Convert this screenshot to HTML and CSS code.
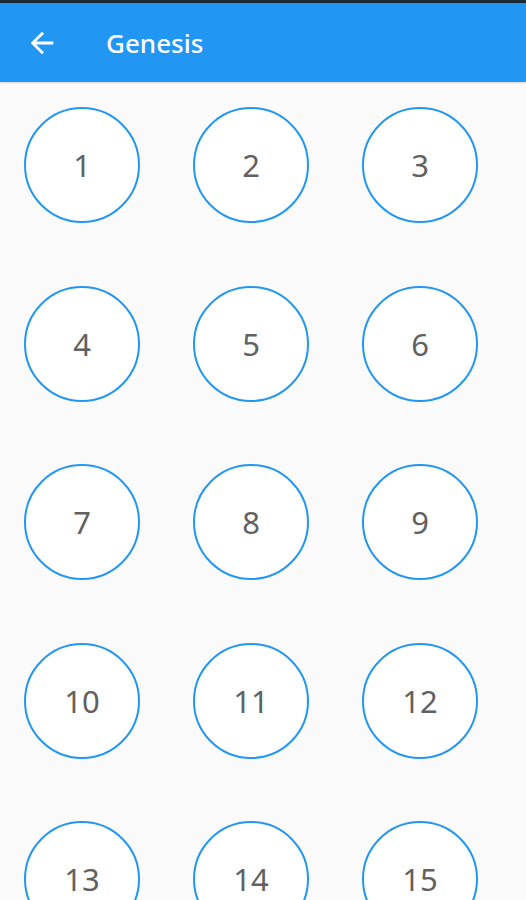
FILE: index.html
```html
<!DOCTYPE html>
<html lang="en">
<head>
    <meta charset="UTF-8">
    <meta name="viewport" content="width=device-width, initial-scale=1.0">
    <title>Genesis</title>
    <link rel="stylesheet" href="styles.css">
</head>
<body>
    <div class="status-bar"></div>
    <header class="app-bar">
        <button class="back-button" aria-label="Back">
            <svg viewBox="0 0 24 24" width="34" height="34">
                <path d="M20 11H7.83l5.59-5.59L12 4l-8 8 8 8 1.41-1.41L7.83 13H20v-2z" fill="#fff"/>
            </svg>
        </button>
        <h1 class="title">Genesis</h1>
    </header>

    <!-- Chapter list -->
    <main class="chapters">
        <a class="chapter" href="#">1</a>
        <a class="chapter" href="#">2</a>
        <a class="chapter" href="#">3</a>
        <a class="chapter" href="#">4</a>
        <a class="chapter" href="#">5</a>
        <a class="chapter" href="#">6</a>
        <a class="chapter" href="#">7</a>
        <a class="chapter" href="#">8</a>
        <a class="chapter" href="#">9</a>
        <a class="chapter" href="#">10</a>
        <a class="chapter" href="#">11</a>
        <a class="chapter" href="#">12</a>
        <a class="chapter" href="#">13</a>
        <a class="chapter" href="#">14</a>
        <a class="chapter" href="#">15</a>
    </main>
</body>
</html>
```

FILE: styles.css
```css
body {
    margin: 0;
    background-color: #fafafa;
    font-family: "Noto Sans", Roboto, sans-serif;
    overflow: hidden;
}
.status-bar {
    height: 3px;
    background-color: #1d2a36;
}
.app-bar {
    height: 79px;
    background-color: #2196f3;
    display: flex;
    align-items: center;
    box-shadow: 0 1px 2px rgba(0, 0, 0, 0.15);
}
.back-button {
    width: 34px;
    height: 34px;
    margin-left: 25px;
    padding: 0;
    border: none;
    background: none;
    display: flex;
}
.title {
    margin: 0 0 0 47px;
    font-size: 26px;
    font-weight: 500;
    color: #fff;
}
.chapters {
    display: grid;
    grid-template-columns: repeat(3, 116px);
    column-gap: 53px;
    row-gap: 62.5px;
    padding: 25px 0 0 24px;
}
.chapter {
    width: 116px;
    height: 116px;
    box-sizing: border-box;
    border: 2.5px solid #2196f3;
    border-radius: 50%;
    background-color: #fff;
    display: flex;
    align-items: center;
    justify-content: center;
    font-size: 31px;
    color: #616161;
    text-decoration: none;
}
```
